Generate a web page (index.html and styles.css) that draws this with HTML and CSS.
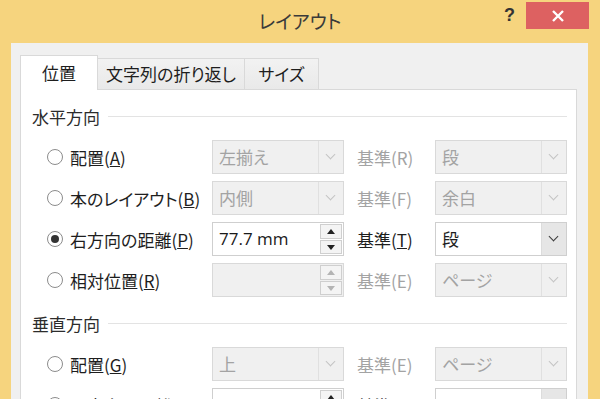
FILE: index.html
```html
<!DOCTYPE html>
<html lang="ja">

<head>
    <meta charset="UTF-8">
    <title>レイアウト</title>
    <link rel="stylesheet" href="styles.css">
</head>

<body>
    <div class="window">
        <div class="titlebar">
            <div></div>
            <div class="caption">レイアウト</div>
            <div class="controls">
                <span class="help">?</span>
                <span class="close">
                    <svg width="14" height="14" viewBox="0 0 14 14"><path d="M2 2L12 12M12 2L2 12" stroke="#fff" stroke-width="2.4"/></svg>
                </span>
            </div>
        </div>
        <div class="frame">
            <ul class="tabs">
                <li class="active">位置</li>
                <li>文字列の折り返し</li>
                <li>サイズ</li>
            </ul>
            <div class="pane">
                <div class="group"><span>水平方向</span></div>

                <div class="row">
                    <label class="opt"><i class="radio"></i><span>配置(<u>A</u>)</span></label>
                    <div class="combo off"><span>左揃え</span><b class="drop"></b></div>
                    <span class="ref off">基準(R)</span>
                    <div class="combo off"><span>段</span><b class="drop"></b></div>
                </div>
                <div class="row">
                    <label class="opt"><i class="radio"></i><span>本のレイアウト(<u>B</u>)</span></label>
                    <div class="combo off"><span>内側</span><b class="drop"></b></div>
                    <span class="ref off">基準(F)</span>
                    <div class="combo off"><span>余白</span><b class="drop"></b></div>
                </div>
                <div class="row">
                    <label class="opt"><i class="radio on"></i><span>右方向の距離(<u>P</u>)</span></label>
                    <div class="spin"><span>77.7 mm</span><b class="arrows"><em class="up"></em><em class="down"></em></b></div>
                    <span class="ref">基準(<u>T</u>)</span>
                    <div class="combo"><span>段</span><b class="drop"></b></div>
                </div>
                <div class="row">
                    <label class="opt"><i class="radio"></i><span>相対位置(<u>R</u>)</span></label>
                    <div class="spin off"><span></span><b class="arrows"><em class="up"></em><em class="down"></em></b></div>
                    <span class="ref off">基準(E)</span>
                    <div class="combo off"><span>ページ</span><b class="drop"></b></div>
                </div>

                <div class="group"><span>垂直方向</span></div>

                <div class="row">
                    <label class="opt"><i class="radio"></i><span>配置(<u>G</u>)</span></label>
                    <div class="combo off"><span>上</span><b class="drop"></b></div>
                    <span class="ref off">基準(E)</span>
                    <div class="combo off"><span>ページ</span><b class="drop"></b></div>
                </div>
                <div class="row">
                    <label class="opt"><i class="radio on"></i><span>下方向の距離(<u>S</u>)</span></label>
                    <div class="spin"><span>172.7 mm</span><b class="arrows"><em class="up"></em><em class="down"></em></b></div>
                    <span class="ref">基準(<u>W</u>)</span>
                    <div class="combo"><span>ページ</span><b class="drop"></b></div>
                </div>
            </div>
        </div>
    </div>
</body>

</html>
```

FILE: styles.css
```css
* {
    margin: 0;
    padding: 0;
    box-sizing: border-box;
}

ul,li {
    list-style: none;
}

body {
    width: 600px;
    height: 399px;
    overflow: hidden;
    background-color: #f6d47e;
    font-family: "Noto Sans CJK JP", sans-serif;
    font-feature-settings: "palt";
    color: #1e1e1e;
}

.titlebar {
    display: grid;
    grid-template-columns: 1fr auto 1fr;
    height: 43px;
}
.titlebar .caption {
    padding-top: 7px;
    font-size: 19px;
    color: #3a3a3a;
}
.titlebar .controls {
    display: flex;
    justify-content: flex-end;
    align-items: flex-start;
    padding-right: 11px;
}
.titlebar .help {
    margin: 5px 11px 0 0;
    font-family: "Liberation Sans", sans-serif;
    font-size: 18px;
    font-weight: bold;
    color: #333;
}
.titlebar .close {
    display: flex;
    justify-content: center;
    align-items: center;
    width: 63px;
    height: 27px;
    margin-top: 2px;
    background-color: #dd6161;
}

.frame {
    width: 577px;
    height: 356px;
    margin-left: 11px;
    padding: 12px 11px 0 9px;
    background-color: #f0f0f0;
}

.tabs {
    display: flex;
    align-items: flex-end;
    height: 34px;
}
.tabs li {
    height: 31px;
    padding: 0 12px;
    line-height: 29px;
    font-size: 17px;
    border: 1px solid #d9d9d9;
    border-bottom: none;
    border-left: none;
    background: linear-gradient(#f2f2f2, #e9e9e9);
}
.tabs li:first-child {
    border-left: 1px solid #d9d9d9;
}
.tabs li.active {
    position: relative;
    z-index: 1;
    width: 78px;
    height: 35px;
    margin-bottom: -1px;
    padding: 0;
    text-align: center;
    line-height: 33px;
    background: #fff;
    border-right: 1px solid #d9d9d9;
}
.tabs li:nth-child(2) {
    width: 147px;
    text-align: center;
    padding: 0;
}
.tabs li:nth-child(3) {
    width: 74px;
    text-align: center;
    padding: 0;
}

.pane {
    height: 320px;
    padding: 14px 9px 0 26px;
    background-color: #fff;
    border: 1px solid #d9d9d9;
}

.group {
    display: flex;
    align-items: center;
    gap: 8px;
    height: 24px;
    margin: 0 0 12px -15px;
    font-size: 17px;
    color: #2c2c2c;
}
.group::after {
    content: "";
    flex: 1;
    height: 1px;
    background-color: #e3e3e3;
}
.row + .group {
    margin-top: 14px;
}

.row {
    display: grid;
    grid-template-columns: 165px 132px 91px 132px;
    align-items: center;
    height: 34px;
    margin-bottom: 7px;
    font-size: 17px;
}

.opt {
    display: flex;
    align-items: center;
    gap: 7px;
    white-space: nowrap;
}
.radio {
    flex: none;
    width: 16px;
    height: 16px;
    border: 1px solid #8c8c8c;
    border-radius: 50%;
    background-color: #fff;
    position: relative;
}
.radio.on::after {
    content: "";
    position: absolute;
    left: 3px;
    top: 3px;
    width: 8px;
    height: 8px;
    border-radius: 50%;
    background-color: #333;
}

.ref {
    padding-left: 13px;
}
.off {
    color: #a3a3a3;
}

.combo,
.spin {
    display: flex;
    height: 34px;
    border: 1px solid #cfcfcf;
    background-color: #fff;
}
.combo.off,
.spin.off {
    border-color: #d9d9d9;
    background-color: #f0f0f0;
}
.combo span,
.spin span {
    flex: 1;
    padding-left: 6px;
    line-height: 31px;
}
.spin span {
    font-family: "Open Sans", sans-serif;
    font-feature-settings: normal;
    color: #1a1a1a;
}

.drop {
    position: relative;
    width: 25px;
    border-left: 1px solid #dcdcdc;
    background-color: #e6e6e6;
}
.combo.off .drop {
    border-left-color: #e0e0e0;
    background-color: transparent;
}
.drop::after {
    content: "";
    position: absolute;
    left: 8px;
    top: 10px;
    width: 6px;
    height: 6px;
    border-right: 1.5px solid #3c3c3c;
    border-bottom: 1.5px solid #3c3c3c;
    transform: rotate(45deg);
}
.combo.off .drop::after {
    border-color: #c4c4c4;
}

.arrows {
    display: flex;
    flex-direction: column;
    gap: 1px;
    width: 23px;
    padding: 1px 1px 1px 0;
}
.arrows em {
    flex: 1;
    position: relative;
    border: 1px solid #cfcfcf;
    background-color: #f4f4f4;
}
.arrows em::after {
    content: "";
    position: absolute;
    left: 6px;
    border-left: 4px solid transparent;
    border-right: 4px solid transparent;
}
.arrows .up::after {
    top: 4px;
    border-bottom: 5px solid #222;
}
.arrows .down::after {
    top: 4px;
    border-top: 5px solid #222;
}
.spin.off .arrows .up::after {
    border-bottom-color: #b4b4b4;
}
.spin.off .arrows .down::after {
    border-top-color: #b4b4b4;
}
```
